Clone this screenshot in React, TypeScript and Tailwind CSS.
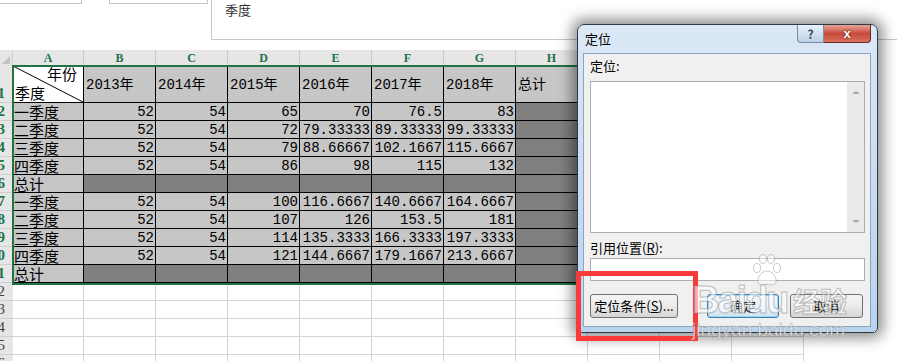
import React from 'react';

type Row = { label: string; values: string[] | null };

const dataRows: Row[] = [
  { label: '一季度', values: ['52', '54', '65', '70', '76.5', '83'] },
  { label: '二季度', values: ['52', '54', '72', '79.33333', '89.33333', '99.33333'] },
  { label: '三季度', values: ['52', '54', '79', '88.66667', '102.1667', '115.6667'] },
  { label: '四季度', values: ['52', '54', '86', '98', '115', '132'] },
  { label: '总计', values: null },
  { label: '一季度', values: ['52', '54', '100', '116.6667', '140.6667', '164.6667'] },
  { label: '二季度', values: ['52', '54', '107', '126', '153.5', '181'] },
  { label: '三季度', values: ['52', '54', '114', '135.3333', '166.3333', '197.3333'] },
  { label: '四季度', values: ['52', '54', '121', '144.6667', '179.1667', '213.6667'] },
  { label: '总计', values: null },
];

const letters = ['A', 'B', 'C', 'D', 'E', 'F', 'G', 'H', 'I', 'J', 'K'];
const years = ['2013年', '2014年', '2015年', '2016年', '2017年', '2018年', '总计'];

const RowHead = ({ n, h, active }: { n: number; h: string; active: boolean }) => (
  <div
    className={`${h} w-[13px] shrink-0 flex items-end justify-end overflow-hidden pr-[8px] bg-[#e6e6e6] border-b border-[#cfcfcf] font-['Liberation_Serif',serif] text-[15px] leading-[17px] ${
      active ? 'text-[#217346] font-bold' : 'text-[#444]'
    }`}
  >
    {n}
  </div>
);

const EmptyCells = ({ from }: { from: number }) => (
  <>
    {letters.slice(from).map((l) => (
      <div key={l} className="w-[72px] shrink-0 border-r border-b border-[#d4d4d4] bg-white" />
    ))}
  </>
);

const Sheet = () => (
  <div className="font-['Liberation_Mono','Noto_Sans_CJK_SC',monospace] text-black">
    {/* column letters */}
    <div className="flex h-[16px]">
      <div className="relative w-[13px] shrink-0 bg-[#e6e6e6] border-r border-[#cfcfcf]">
        <div className="absolute right-[2px] bottom-[2px] w-0 h-0 border-l-[8px] border-l-transparent border-b-[8px] border-b-[#c3c3c3]" />
      </div>
      {letters.map((l, i) => (
        <div
          key={l}
          className={`${i === 0 ? 'w-[71px]' : 'w-[72px]'} shrink-0 flex items-center justify-center border-r ${
            i < 8 ? 'bg-[#e6e6e6] border-[#c8c8c8]' : 'bg-white border-[#d4d4d4]'
          } font-['Liberation_Serif',serif] font-bold text-[12px] text-[#217346]`}
        >
          {i < 8 ? l : ''}
        </div>
      ))}
    </div>

    {/* header row */}
    <div className="flex h-[37px]">
      <RowHead n={1} h="h-[37px]" active />
      <div className="relative w-[71px] shrink-0 bg-white border-r border-b border-black text-[15px] font-['Noto_Sans_CJK_SC',sans-serif]">
        <svg className="absolute inset-0" width="70" height="36">
          <line x1="0" y1="0" x2="70" y2="36" stroke="#000" strokeWidth="1" />
        </svg>
        <span className="absolute right-[6px] top-[-1px] leading-[18px]">年份</span>
        <span className="absolute left-[2px] bottom-[0px] leading-[18px]">季度</span>
      </div>
      {years.map((y) => (
        <div
          key={y}
          className="w-[72px] shrink-0 flex items-center pt-[3px] pl-[2px] bg-[#c6c6c6] border-r border-b border-black text-[14px]"
        >
          {y}
        </div>
      ))}
      <EmptyCells from={8} />
    </div>

    {/* data rows */}
    {dataRows.map((r, i) => (
      <div key={i} className="flex h-[18px]">
        <RowHead n={i + 2} h="h-[18px]" active />
        <div className="w-[71px] shrink-0 flex items-end pl-[1px] bg-[#c6c6c6] border-r border-b border-black text-[15px] leading-[17px] font-['Noto_Sans_CJK_SC',sans-serif]">
          {r.label}
        </div>
        {r.values
          ? r.values.map((v, j) => (
              <div
                key={j}
                className="w-[72px] shrink-0 flex items-end justify-end pr-[1px] bg-[#c6c6c6] border-r border-b border-black text-[14px] leading-[16px]"
              >
                {v}
              </div>
            ))
          : [0, 1, 2, 3, 4, 5].map((j) => (
              <div key={j} className="w-[72px] shrink-0 bg-[#808080] border-r border-b border-black" />
            ))}
        <div className="w-[72px] shrink-0 bg-[#808080] border-r border-b border-black" />
        <EmptyCells from={8} />
      </div>
    ))}

    {/* empty rows */}
    {[12, 13, 14, 15, 16].map((n) => (
      <div key={n} className="flex h-[18px]">
        <RowHead n={n} h="h-[18px]" active={false} />
        <div className="w-[71px] shrink-0 border-r border-b border-[#d4d4d4]" />
        <EmptyCells from={1} />
      </div>
    ))}
  </div>
);

const Paw = () => (
  <svg width="30" height="34" viewBox="0 0 30 34" className="absolute left-[752px] top-[254px] opacity-70">
    <g fill="rgba(255,255,255,0.75)" stroke="rgba(120,120,120,0.55)" strokeWidth="1">
      <ellipse cx="5" cy="14" rx="3.5" ry="4.5" />
      <ellipse cx="11" cy="5" rx="3.5" ry="4.5" />
      <ellipse cx="19" cy="5" rx="3.5" ry="4.5" />
      <ellipse cx="25" cy="14" rx="3.5" ry="4.5" />
      <path d="M15 17 C9 17 5 24 6 28 C7 32 11 31 15 30 C19 31 23 32 24 28 C25 24 21 17 15 17 Z" />
    </g>
  </svg>
);

const Dialog = () => (
  <div className="absolute left-[577px] top-[24px] w-[301px] h-[309px] rounded-t-[7px] rounded-b-[5px] border border-[#2f3945] bg-linear-to-b from-[#dbe8f6] via-[#c9dcf1] to-[#b9d3ee] shadow-[0_0_14px_5px_rgba(0,0,0,0.45)] font-['Noto_Sans_CJK_SC',sans-serif] text-black">
    <div className="absolute left-[7px] top-[6px] text-[13px] leading-[16px]">定位</div>

    <div className="absolute right-[6px] top-0 flex">
      <div className="w-[27px] h-[18px] flex items-center justify-center rounded-bl-[4px] border border-t-0 border-[#7d8ea3] bg-linear-to-b from-[#e9f1fa] to-[#bcd0e6] text-[12px] font-bold text-[#394a5e] leading-none">
        ?
      </div>
      <div className="w-[47px] h-[18px] flex items-center justify-center rounded-br-[4px] border border-t-0 border-l-0 border-[#6b2a24] bg-linear-to-b from-[#e6a59b] via-[#c8493a] to-[#d6705f] text-white text-[13px] font-bold leading-none [text-shadow:0_0_2px_#3a0a05] font-['Liberation_Sans',sans-serif]">
        x
      </div>
    </div>

    <div className="absolute left-[5px] top-[28px] w-[288px] h-[274px] border border-[#8fa4bd] bg-[#f0f0f0] px-[6px] text-[13px]">
      <div className="mt-[3px] leading-[18px]">定位:</div>
      <div className="mt-[6px] h-[152px] w-[275px] flex border border-[#abadb3] bg-white">
        <div className="flex-1" />
        <div className="w-[17px] flex flex-col justify-between items-center py-[9px] bg-[#eaeaea]">
          <div className="w-0 h-0 border-x-[4px] border-x-transparent border-b-[3px] border-b-[#a8a8a8]" />
          <div className="w-0 h-0 border-x-[4px] border-x-transparent border-t-[3px] border-t-[#a8a8a8]" />
        </div>
      </div>
      <div className="mt-[6px] leading-[18px]">
        引用位置(<span className="underline">R</span>):
      </div>
      <div className="mt-[1px] h-[23px] w-[275px] border border-[#abadb3] bg-white" />
      <div className="mt-[13px] flex">
        <div className="w-[88px] h-[24px] flex items-center justify-center rounded-[3px] border border-[#707070] bg-linear-to-b from-[#f4f4f4] via-[#ebebeb] to-[#d5d5d5] text-[13px]">
          定位条件(<span className="underline">S</span>)...
        </div>
        <div className="ml-[29px] w-[72px] h-[24px] flex items-center justify-center rounded-[3px] border border-[#3c7fb1] shadow-[inset_0_0_0_1px_#9fd6f4] bg-linear-to-b from-[#f2f8fc] via-[#e6f1f9] to-[#cfe3f1] text-[13px]">
          确定
        </div>
        <div className="ml-[11px] w-[73px] h-[24px] flex items-center justify-center rounded-[3px] border border-[#707070] bg-linear-to-b from-[#f4f4f4] via-[#ebebeb] to-[#d5d5d5] text-[13px]">
          取消
        </div>
      </div>
    </div>
  </div>
);

export default function App() {
  return (
    <div className="relative w-[897px] h-[361px] overflow-hidden bg-white">
      {/* edges of panes above the sheet */}
      <div className="flex h-[50px] font-['Noto_Sans_CJK_SC',sans-serif]">
        <div className="w-[82px] h-[4px] border-r border-b border-[#c6c6c6]" />
        <div className="ml-[27px] w-[99px] h-[4px] border-x border-b border-[#c6c6c6]" />
        <div className="ml-[3px] flex-1 h-[40px] border-l border-b border-[#c6c6c6] pl-[13px] pt-[2px] text-[13px] leading-[16px] text-[#333]">
          季度
        </div>
      </div>

      <Sheet />

      {/* selection outline A1:H11 */}
      <div className="absolute left-[12px] top-[65px] w-[640px] h-[220px] border-2 border-[#217346]" />

      <Dialog />

      {/* red highlight */}
      <div className="absolute left-[576px] top-[271px] w-[122px] h-[70px] border-[5px] border-[#fa3a3a]" />

      {/* watermark */}
      <Paw />
      <div className="absolute left-[692px] top-[280px] text-[38px] leading-[40px] font-bold tracking-[-2px] font-['Liberation_Sans',sans-serif] text-[rgba(255,255,255,0.6)] [-webkit-text-stroke:1px_rgba(130,130,130,0.5)]">
        Baidu
      </div>
      <div className="absolute left-[793px] top-[284px] text-[27px] leading-[34px] font-bold font-['Noto_Sans_CJK_SC',sans-serif] text-[rgba(255,255,255,0.6)] [-webkit-text-stroke:1px_rgba(130,130,130,0.5)]">
        经验
      </div>
      <div className="absolute left-[692px] top-[319px] text-[19px] leading-[22px] font-['Liberation_Sans',sans-serif] text-[rgba(255,255,255,0.7)] [-webkit-text-stroke:0.6px_rgba(130,130,130,0.6)]">
        jingyan.baidu.com
      </div>
    </div>
  );
}
